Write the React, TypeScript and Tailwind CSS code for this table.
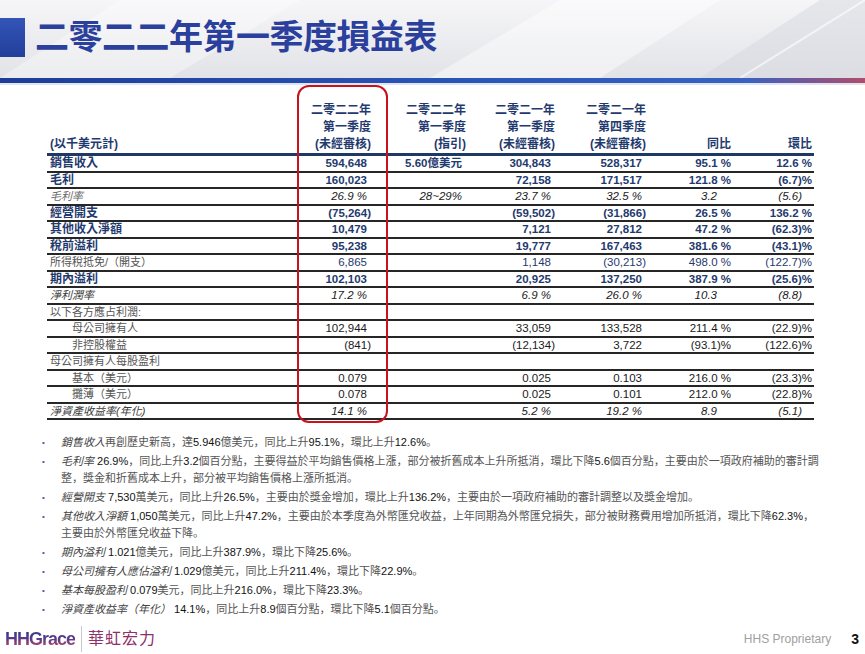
import React from 'react'

const FONT = "font-['Liberation_Sans','Noto_Sans_CJK_TC',sans-serif]"
const NOTE_FONT = "font-['Liberation_Sans','Noto_Sans_CJK_JP',sans-serif]"

type Kind = 'bold' | 'italic' | 'italicGray' | 'tax' | 'plain'

type Row = {
  label: string
  vals: string[]
  kind: Kind
  indent?: boolean
}

const rows: Row[] = [
  { label: '銷售收入', vals: ['594,648', '5.60億美元', '304,843', '528,317', '95.1 %', '12.6 %'], kind: 'bold' },
  { label: '毛利', vals: ['160,023', '', '72,158', '171,517', '121.8 %', '(6.7)%'], kind: 'bold' },
  { label: '毛利率', vals: ['26.9 %', '28~29%', '23.7 %', '32.5 %', '3.2', '(5.6)'], kind: 'italicGray' },
  { label: '經營開支', vals: ['(75,264)', '', '(59,502)', '(31,866)', '26.5 %', '136.2 %'], kind: 'bold' },
  { label: '其他收入淨額', vals: ['10,479', '', '7,121', '27,812', '47.2 %', '(62.3)%'], kind: 'bold' },
  { label: '稅前溢利', vals: ['95,238', '', '19,777', '167,463', '381.6 %', '(43.1)%'], kind: 'bold' },
  { label: '所得稅抵免/（開支）', vals: ['6,865', '', '1,148', '(30,213)', '498.0 %', '(122.7)%'], kind: 'tax' },
  { label: '期內溢利', vals: ['102,103', '', '20,925', '137,250', '387.9 %', '(25.6)%'], kind: 'bold' },
  { label: '淨利潤率', vals: ['17.2 %', '', '6.9 %', '26.0 %', '10.3', '(8.8)'], kind: 'italic' },
  { label: '以下各方應占利潤:', vals: ['', '', '', '', '', ''], kind: 'plain' },
  { label: '母公司擁有人', vals: ['102,944', '', '33,059', '133,528', '211.4 %', '(22.9)%'], kind: 'plain', indent: true },
  { label: '非控股權益', vals: ['(841)', '', '(12,134)', '3,722', '(93.1)%', '(122.6)%'], kind: 'plain', indent: true },
  { label: '母公司擁有人每股盈利', vals: ['', '', '', '', '', ''], kind: 'plain' },
  { label: '基本（美元）', vals: ['0.079', '', '0.025', '0.103', '216.0 %', '(23.3)%'], kind: 'plain', indent: true },
  { label: '攤薄（美元）', vals: ['0.078', '', '0.025', '0.101', '212.0 %', '(22.8)%'], kind: 'plain', indent: true },
  { label: '淨資產收益率(年化)', vals: ['14.1 %', '', '5.2 %', '19.2 %', '8.9', '(5.1)'], kind: 'italic' },
]

const headers = [
  ['二零二二年', '第一季度', '(未經審核)'],
  ['二零二二年', '第一季度', '(指引)'],
  ['二零二一年', '第一季度', '(未經審核)'],
  ['二零二一年', '第四季度', '(未經審核)'],
  ['', '', '同比'],
  ['', '', '環比'],
]

const cols = [
  'w-[90px] pr-[16px]',
  'w-[82px] pr-[3px]',
  'w-[90px] pr-[4px]',
  'w-[90px] pr-[3px]',
  'w-[85px] pr-[3px]',
  'w-[80px] pr-[2px]',
]

function pad(i: number, v: string) {
  if (i < 4) return v.endsWith(')') ? '' : 'pr-[4px]'
  if (v.endsWith('%')) return ''
  if (v.endsWith(')')) return 'pr-[10px]'
  return 'pr-[14px]'
}

const labelStyle: Record<Kind, string> = {
  bold: 'font-bold text-[12px] text-[#1f3a6e]',
  italic: 'italic text-[11px] text-[#3a3a3a]',
  italicGray: 'italic text-[11px] text-[#6a6a6a]',
  tax: 'text-[11px] text-[#555]',
  plain: 'text-[11px] text-[#555]',
}

const numStyle: Record<Kind, string> = {
  bold: 'font-bold text-[11.5px] text-[#1f3a6e]',
  italic: 'italic text-[11.5px] text-[#1a1a1a]',
  italicGray: 'italic text-[11.5px] text-[#1a1a1a]',
  tax: 'text-[11.5px] text-[#1f3a6e]',
  plain: 'text-[11.5px] text-[#1a1a1a]',
}

type Bullet = { em: string; lines: string[] }

const bullets: Bullet[] = [
  { em: '銷售收入', lines: ['再創歷史新高，達5.946億美元，同比上升95.1%，環比上升12.6%。'] },
  {
    em: '毛利率',
    lines: [
      ' 26.9%，同比上升3.2個百分點，主要得益於平均銷售價格上漲，部分被折舊成本上升所抵消，環比下降5.6個百分點，主要由於一項政府補助的審計調',
      '整，獎金和折舊成本上升，部分被平均銷售價格上漲所抵消。',
    ],
  },
  { em: '經營開支', lines: [' 7,530萬美元，同比上升26.5%，主要由於獎金增加，環比上升136.2%，主要由於一項政府補助的審計調整以及獎金增加。'] },
  {
    em: '其他收入淨額',
    lines: [
      ' 1,050萬美元，同比上升47.2%，主要由於本季度為外幣匯兌收益，上年同期為外幣匯兌損失，部分被財務費用增加所抵消，環比下降62.3%，',
      '主要由於外幣匯兌收益下降。',
    ],
  },
  { em: '期內溢利', lines: [' 1.021億美元，同比上升387.9%，環比下降25.6%。'] },
  { em: '母公司擁有人應佔溢利', lines: [' 1.029億美元，同比上升211.4%，環比下降22.9%。'] },
  { em: '基本每股盈利', lines: [' 0.079美元，同比上升216.0%，環比下降23.3%。'] },
  { em: '淨資產收益率（年化）', lines: [' 14.1%，同比上升8.9個百分點，環比下降5.1個百分點。'] },
]

function Rich({ text }: { text: string }) {
  const parts = text.split(/(\d[\d.,~]*%?)/g)
  return (
    <>
      {parts.map((p, i) =>
        /^\d/.test(p) ? (
          <span key={i} className="text-[#111]">
            {p}
          </span>
        ) : (
          <span key={i}>{p}</span>
        )
      )}
    </>
  )
}

export default function App() {
  return (
    <div className={`relative flex h-[654px] w-[865px] flex-col overflow-hidden bg-white ${FONT}`}>
      {/* Title band */}
      <div className="relative h-[78px] overflow-hidden bg-linear-to-b from-[#f6f6f8] to-[#e2e3e8]">
        <svg className="absolute inset-0" width="865" height="78" viewBox="0 0 865 78">
          <polygon points="0,78 120,0 300,0 170,78" fill="#ffffff" opacity="0.35" />
          <polygon points="430,78 560,0 720,0 600,78" fill="#ffffff" opacity="0.45" />
          <polygon points="700,78 820,0 865,0 865,78" fill="#d6d7de" opacity="0.5" />
          <line x1="740" y1="78" x2="865" y2="0" stroke="#ffffff" strokeWidth="2" opacity="0.6" />
        </svg>
        <div className="relative flex items-center pt-[18px]">
          <div className="h-[39px] w-[25px] bg-linear-to-b from-[#3355b8] to-[#223f9a]" />
          <h1 className="ml-[10px] text-[34px] leading-[39px] font-bold tracking-[-0.5px] text-[#2b3f9c]">
            二零二二年第一季度損益表
          </h1>
        </div>
      </div>
      <div className="h-[5px] bg-[linear-gradient(90deg,#1e3c98_0%,#2a56b8_55%,#3862c2_86%,#b24c6c_100%)]" />
      <div className="h-[2px] bg-[#dfe5f2]" />

      {/* Table */}
      <div className="relative ml-[47px] mt-[17px] w-[767px]">
        <div className="absolute top-[-17px] bottom-[-3px] left-[250px] w-[91px] rounded-[12px] border-2 border-[#c8121c]" />
        <div className="flex items-end border-b-[3px] border-[#1f3864] text-[12px] leading-[17px] font-bold text-[#1f3a6e]">
          <div className="w-[250px] pl-[3px]">(以千美元計)</div>
          {headers.map((h, i) => (
            <div key={i} className={`${cols[i]} flex flex-col text-right`}>
              {h.map((t, j) => (
                <div key={j} className="h-[17px] whitespace-nowrap">
                  {t}
                </div>
              ))}
            </div>
          ))}
        </div>
        {rows.map((r, ri) => (
          <div key={ri} className="flex h-[16.5px] items-center border-b-2 border-[#262626]">
            <div
              className={`w-[250px] whitespace-nowrap leading-[14px] ${r.indent ? 'pl-[25px]' : 'pl-[3px]'} ${labelStyle[r.kind]}`}
            >
              {r.label}
            </div>
            {r.vals.map((v, i) => (
              <div
                key={i}
                className={`${cols[i]} whitespace-nowrap text-right leading-[14px] ${
                  i === 1 && r.kind === 'italicGray' ? 'italic text-[11.5px] text-[#1a1a1a]' : numStyle[r.kind]
                }`}
              >
                <span className={`inline-block ${pad(i, v)}`}>{v}</span>
              </div>
            ))}
          </div>
        ))}
      </div>

      {/* Notes */}
      <div className={`mt-[14px] flex flex-col gap-[2px] pl-[42px] text-[11px] leading-[17px] text-[#555] ${NOTE_FONT}`}>
        {bullets.map((b, bi) => (
          <div key={bi} className="flex">
            <span className="w-[19px] text-[8px] text-[#4a5a9a]">•</span>
            <div>
              {b.lines.map((l, li) => (
                <div key={li} className="whitespace-nowrap">
                  {li === 0 && <span className="italic text-[#444]">{b.em}</span>}
                  <Rich text={l} />
                </div>
              ))}
            </div>
          </div>
        ))}
      </div>

      {/* Footer */}
      <div className="mt-auto flex h-[34px] items-center pt-[4px] pl-[5px] pr-[5px]">
        <span className="bg-linear-to-b from-[#2a3890] via-[#5a3a8a] to-[#c23a5c] bg-clip-text text-[18px] leading-[18px] font-bold tracking-[-1px] text-transparent">
          HHGrace
        </span>
        <div className="mx-[6px] h-[26px] w-px bg-[#c8c8d0]" />
        <span className="text-[16px] leading-[18px] tracking-[1px] text-[#8e2f6a]">華虹宏力</span>
        <span className="ml-auto text-[12px] text-[#a0a0a0]">HHS Proprietary</span>
        <span className="ml-[20px] mr-[1px] text-[14px] font-bold text-[#111]">3</span>
      </div>
    </div>
  )
}
